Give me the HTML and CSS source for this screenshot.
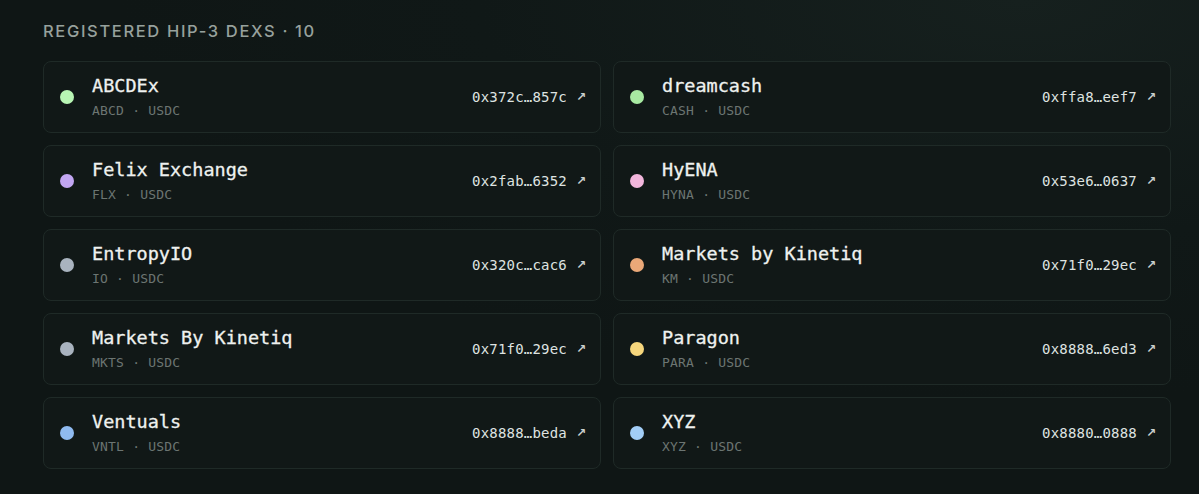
FILE: index.html
```html
<!DOCTYPE html>
<html lang="en">
<head>
<meta charset="utf-8">
<title>Registered HIP-3 DEXs</title>
<link rel="stylesheet" href="styles.css">
</head>
<body>
<section class="panel">
  <h2 class="heading">Registered HIP-3 DEXs · 10</h2>
  <div class="grid">
    <a class="card">
      <span class="dot c-green1"></span>
      <div class="info"><div class="name">ABCDEx</div><div class="sub">ABCD · USDC</div></div>
      <span class="addr">0x372c…857c</span><span class="arrow">↗</span>
    </a>
    <a class="card">
      <span class="dot c-green2"></span>
      <div class="info"><div class="name">dreamcash</div><div class="sub">CASH · USDC</div></div>
      <span class="addr">0xffa8…eef7</span><span class="arrow">↗</span>
    </a>
    <a class="card">
      <span class="dot c-purple"></span>
      <div class="info"><div class="name">Felix Exchange</div><div class="sub">FLX · USDC</div></div>
      <span class="addr">0x2fab…6352</span><span class="arrow">↗</span>
    </a>
    <a class="card">
      <span class="dot c-pink"></span>
      <div class="info"><div class="name">HyENA</div><div class="sub">HYNA · USDC</div></div>
      <span class="addr">0x53e6…0637</span><span class="arrow">↗</span>
    </a>
    <a class="card">
      <span class="dot c-gray"></span>
      <div class="info"><div class="name">EntropyIO</div><div class="sub">IO · USDC</div></div>
      <span class="addr">0x320c…cac6</span><span class="arrow">↗</span>
    </a>
    <a class="card">
      <span class="dot c-orange"></span>
      <div class="info"><div class="name">Markets by Kinetiq</div><div class="sub">KM · USDC</div></div>
      <span class="addr">0x71f0…29ec</span><span class="arrow">↗</span>
    </a>
    <a class="card">
      <span class="dot c-gray"></span>
      <div class="info"><div class="name">Markets By Kinetiq</div><div class="sub">MKTS · USDC</div></div>
      <span class="addr">0x71f0…29ec</span><span class="arrow">↗</span>
    </a>
    <a class="card">
      <span class="dot c-yellow"></span>
      <div class="info"><div class="name">Paragon</div><div class="sub">PARA · USDC</div></div>
      <span class="addr">0x8888…6ed3</span><span class="arrow">↗</span>
    </a>
    <a class="card">
      <span class="dot c-blue"></span>
      <div class="info"><div class="name">Ventuals</div><div class="sub">VNTL · USDC</div></div>
      <span class="addr">0x8888…beda</span><span class="arrow">↗</span>
    </a>
    <a class="card">
      <span class="dot c-sky"></span>
      <div class="info"><div class="name">XYZ</div><div class="sub">XYZ · USDC</div></div>
      <span class="addr">0x8880…0888</span><span class="arrow">↗</span>
    </a>
  </div>
</section>
</body>
</html>
```

FILE: styles.css
```css
html, body {
  margin: 0;
  height: 100%;
}
body {
  background: radial-gradient(ellipse 900px 400px at 85% 0%, #16201e 0%, #101817 60%, #0f1615 100%);
  background-color: #0f1615;
  font-family: "DejaVu Sans Mono", "Liberation Mono", monospace;
}
.panel {
  padding: 21px 28px 0 43px;
}
.heading {
  margin: 0 0 19px 0;
  font-family: Inter, "Noto Sans", sans-serif;
  font-weight: 500;
  font-size: 16.5px;
  line-height: 21px;
  letter-spacing: 0.1em;
  text-transform: uppercase;
  color: #97a19d;
}
.grid {
  display: grid;
  grid-template-columns: 1fr 1fr;
  column-gap: 12px;
  row-gap: 12px;
}
.card {
  display: flex;
  align-items: center;
  height: 72px;
  box-sizing: border-box;
  padding: 0 16px 0 16px;
  border: 1px solid #1f2a27;
  border-radius: 8px;
  background: #111817;
  text-decoration: none;
}
.dot {
  width: 14px;
  height: 14px;
  border-radius: 50%;
  flex: none;
  margin-right: 18px;
}
.c-green1 { background: #b8f5b4; }
.c-green2 { background: #a8eaa2; }
.c-purple { background: #c2a6f2; }
.c-pink { background: #f2b6dc; }
.c-gray { background: #a9b3bf; }
.c-orange { background: #eaa878; }
.c-yellow { background: #f6d67c; }
.c-blue { background: #8fbaf0; }
.c-sky { background: #a2cdf6; }
.info {
  flex: 1;
  display: flex;
  flex-direction: column;
  gap: 6px;
  margin-top: -1px;
}
.name {
  font-size: 18.5px;
  line-height: 22px;
  color: #eef1ef;
  -webkit-text-stroke: 0.3px #eef1ef;
}
.sub {
  font-size: 13px;
  line-height: 16px;
  letter-spacing: 0.2px;
  color: #6c7572;
}
.addr {
  font-size: 14px;
  letter-spacing: 0.2px;
  color: #dfe3e1;
}
.arrow {
  font-family: "DejaVu Sans", sans-serif;
  font-size: 12px;
  font-weight: bold;
  color: #c9cfcc;
  margin-left: 9px;
  width: 8px;
}
```
